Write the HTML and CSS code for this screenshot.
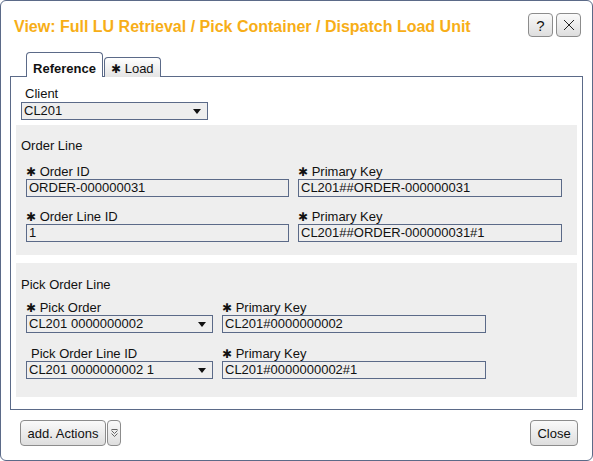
FILE: index.html
```html
<!DOCTYPE html>
<html>
<head>
<meta charset="utf-8">
<link rel="stylesheet" href="styles.css">
</head>
<body>
<div class="dialog">
  <div class="header">
    <div class="title">View: Full LU Retrieval / Pick Container / Dispatch Load Unit</div>
    <div class="hbtns">
      <button class="btn hbtn">?</button>
      <button class="btn hbtn"><svg width="12" height="12" viewBox="0 0 12 12"><path d="M1 1L11 11M11 1L1 11" stroke="#222" stroke-width="1" fill="none"/></svg></button>
    </div>
  </div>
  <div class="tabs">
    <div class="tab active">Reference</div>
    <div class="tab load"><span class="ast">✱</span><span>&nbsp;Load</span></div>
  </div>
  <div class="panel">
    <div class="client">
      <div class="lbl client-lbl">Client</div>
      <div class="select client-sel"><span>CL201</span><span class="arrow"></span></div>
    </div>
    <div class="section s1">
      <div class="stitle">Order Line</div>
      <div class="grid g1">
        <div class="field">
          <div class="lbl"><span class="ast">✱</span> Order ID</div>
          <div class="input w263">ORDER-000000031</div>
        </div>
        <div class="field">
          <div class="lbl"><span class="ast">✱</span> Primary Key</div>
          <div class="input w264">CL201##ORDER-000000031</div>
        </div>
        <div class="field">
          <div class="lbl"><span class="ast">✱</span> Order Line ID</div>
          <div class="input w263">1</div>
        </div>
        <div class="field">
          <div class="lbl"><span class="ast">✱</span> Primary Key</div>
          <div class="input w264">CL201##ORDER-000000031#1</div>
        </div>
      </div>
    </div>
    <div class="section s2">
      <div class="stitle">Pick Order Line</div>
      <div class="grid g2">
        <div class="field">
          <div class="lbl"><span class="ast">✱</span> Pick Order</div>
          <div class="select w186"><span>CL201 0000000002</span><span class="arrow"></span></div>
        </div>
        <div class="field">
          <div class="lbl"><span class="ast">✱</span> Primary Key</div>
          <div class="input w264">CL201#0000000002</div>
        </div>
        <div class="field">
          <div class="lbl indent">Pick Order Line ID</div>
          <div class="select w186"><span>CL201 0000000002 1</span><span class="arrow"></span></div>
        </div>
        <div class="field">
          <div class="lbl"><span class="ast">✱</span> Primary Key</div>
          <div class="input w264">CL201#0000000002#1</div>
        </div>
      </div>
    </div>
  </div>
  <div class="footer">
    <div class="split">
      <button class="btn actions">add. Actions</button>
      <button class="btn more"><svg width="7" height="10" viewBox="0 0 7 10"><path d="M0.5 1.5H6.5M0.5 2.5L3.5 5.5L6.5 2.5M0.5 5.5L3.5 8.5L6.5 5.5" stroke="#555" stroke-width="0.9" fill="none"/></svg></button>
    </div>
    <button class="btn close">Close</button>
  </div>
</div>
</body>
</html>
```
FILE: styles.css
```css
* { box-sizing: border-box; }
html, body { margin: 0; padding: 0; background: #fff; }
body {
  font-family: "Liberation Sans", Arial, sans-serif;
  font-size: 13px;
  color: #111;
}
.dialog {
  width: 593px;
  height: 461px;
  border: 1px solid #5b6a88;
  border-radius: 6px;
  display: flex;
  flex-direction: column;
  background: #fff;
}
.header {
  display: flex;
  align-items: center;
  justify-content: space-between;
  height: 24px;
  margin-top: 12px;
  padding: 0 11px 0 13px;
}
.title {
  color: #f7ae17;
  font-weight: bold;
  font-size: 16px;
  margin-top: 4px;
  white-space: nowrap;
}
.hbtns { display: flex; gap: 3px; }
.btn {
  font-family: inherit;
  font-size: 13px;
  color: #111;
  border: 1px solid #8c8c8c;
  border-radius: 4px;
  background: linear-gradient(#fafafa, #dedede);
  padding: 0;
  display: flex;
  align-items: center;
  justify-content: center;
}
.hbtn { width: 25px; height: 24px; font-size: 15px; }
.tabs {
  display: flex;
  align-items: flex-end;
  gap: 1px;
  margin: 15px 0 -1px 25px;
  position: relative;
  z-index: 1;
}
.tab {
  height: 20px;
  padding: 2px 0 0 6px;
  border: 1px solid #5b6a88;
  border-bottom: none;
  border-radius: 4px 4px 0 0;
  background: linear-gradient(#ffffff, #e4e4e4);
  display: flex;
  align-items: center;
}
.tab.load { width: 57px; }
.tab.active {
  height: 25px;
  width: 77px;
  background: #fff;
  font-weight: bold;
  justify-content: center;
  padding: 6px 0 0 0;
}
.ast { font-family: "DejaVu Sans", sans-serif; font-size: 12px; }
.panel {
  margin: 0 9px;
  height: 334px;
  border: 1px solid #5b6a88;
  padding: 9px 5px 0 5px;
}
.client { padding-left: 5px; }
.lbl { line-height: 15px; height: 15px; white-space: nowrap; }
.client-lbl { padding-left: 4px; }
.select, .input {
  height: 18px;
  border: 1px solid #5b6a88;
  background: #eeeeee;
  line-height: 16px;
  padding-left: 2px;
  white-space: nowrap;
  display: flex;
  align-items: center;
}
.client-sel { width: 187px; margin-top: 1px; }
.select { justify-content: space-between; }
.arrow {
  width: 0; height: 0;
  border-left: 4px solid transparent;
  border-right: 4px solid transparent;
  border-top: 5px solid #111;
  margin-right: 6px;
}
.section {
  background: #eeeeee;
  padding: 13px 0 0 5px;
}
.s1 { margin-top: 5px; height: 130px; }
.s2 { margin-top: 8px; height: 134px; padding-top: 14px; }
.stitle { line-height: 15px; height: 15px; }
.grid {
  display: grid;
  margin-top: 11px;
  padding-left: 5px;
}
.g1 { grid-template-columns: 272px 264px; row-gap: 12px; }
.g2 { grid-template-columns: 196px 264px; margin-top: 8px; row-gap: 13px; }
.input.w263 { width: 263px; }
.input.w264 { width: 264px; }
.select.w186 { width: 187px; }
.indent { padding-left: 5px; }
.footer {
  display: flex;
  justify-content: space-between;
  align-items: center;
  padding: 10px 14px 0 19px;
}
.split { display: flex; gap: 1px; }
.actions { height: 26px; width: 86px; }
.more { height: 26px; width: 14px; }
.close { height: 26px; width: 48px; }
```
